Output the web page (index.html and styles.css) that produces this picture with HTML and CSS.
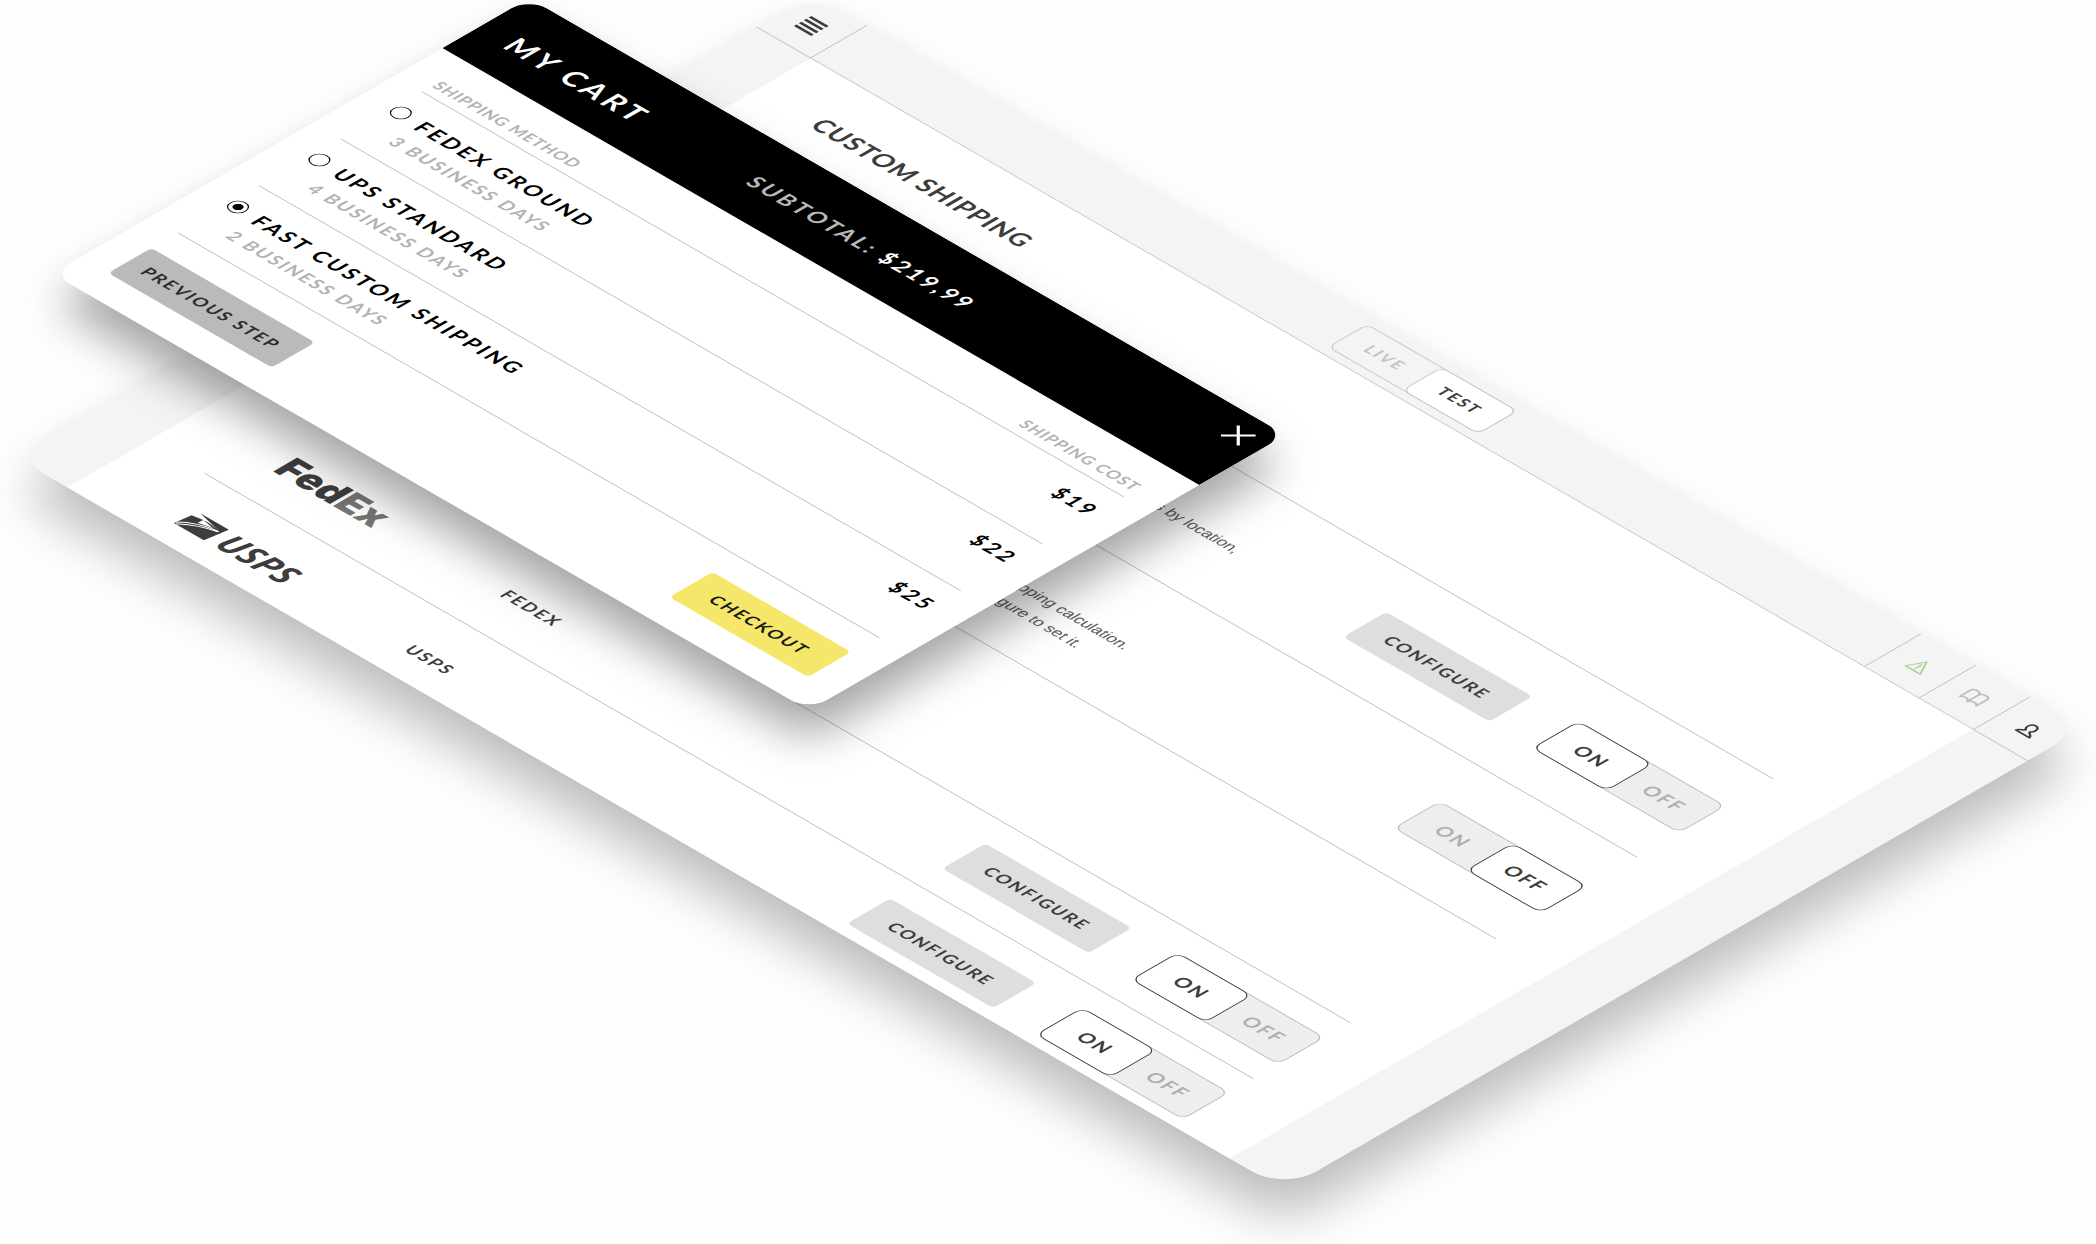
FILE: index.html
```html
<!DOCTYPE html>
<html lang="en">
<head>
<meta charset="utf-8">
<title>Custom shipping</title>
<link rel="stylesheet" href="styles.css">
</head>
<body>
<div class="stage">

  <section class="plane admin" aria-label="Store settings">
    <header class="topbar">
      <button class="cell" type="button" aria-label="Menu">
        <svg width="20" height="20" viewBox="0 0 20 20" stroke="#3d3d3d" stroke-width="3"><path d="M0 1.4h20M0 7.1h20M0 12.9h20M0 18.6h20"/></svg>
      </button>
      <div class="mode" role="group" aria-label="Mode">
        <button type="button" aria-pressed="false">LIVE</button>
        <button type="button" aria-pressed="true">TEST</button>
      </div>
      <nav class="tools">
        <a class="cell" href="#alerts" aria-label="Alerts">
          <svg width="20" height="20" viewBox="0 0 20 20" fill="none" stroke="#a9d796" stroke-width="1.7" stroke-linejoin="round" stroke-linecap="round"><path d="M10 2 18.5 18h-17zM10 8v5M10 15v.6"/></svg>
        </a>
        <a class="cell" href="#docs" aria-label="Guide">
          <svg width="22" height="20" viewBox="0 0 22 20" fill="none" stroke="#bdbdbd" stroke-width="2" stroke-linejoin="round"><path d="M11 5C10 1 3.500 0 1.500 4V17C4 14 9 14 11 18 13 14 18 14 20.500 17V4C18.500 0 12 1 11 5zM11 5V18"/></svg>
        </a>
        <a class="cell" href="#account" aria-label="Account">
          <svg width="20" height="20" viewBox="0 0 20 20" fill="none" stroke="#3d3d3d" stroke-width="2" stroke-linejoin="round"><path d="M9 12.500C5.500 10.500 5.500 3 11 3s5.500 7.500 2.500 9.500c.3 2 5 2.500 5.500 6H3.500c.5-3.500 5.200-4 5.500-6z"/></svg>
        </a>
      </nav>
    </header>

    <main class="content">
      <h1>CUSTOM SHIPPING</h1>
      <ul class="methods">
        <li class="method rates">
          <p class="about">Show rates by location,</p>
          <button class="btn configure" type="button">CONFIGURE</button>
          <div class="switch" role="group" aria-label="Rates by location">
            <button type="button" aria-pressed="true">ON</button>
            <button type="button" aria-pressed="false">OFF</button>
          </div>
        </li>
        <li class="method live">
          <p class="about">Live rates.<br>Enable shipping calculation.<br>Click Configure to set it.</p>
          <div class="switch" role="group" aria-label="Shipping calculation">
            <button type="button" aria-pressed="false">ON</button>
            <button type="button" aria-pressed="true">OFF</button>
          </div>
        </li>
        <li class="method spacer"></li>
        <li class="method">
          <div class="logo fedex">Fed<span>Ex</span></div>
          <h2>FEDEX</h2>
          <button class="btn configure" type="button">CONFIGURE</button>
          <div class="switch" role="group" aria-label="FedEx">
            <button type="button" aria-pressed="true">ON</button>
            <button type="button" aria-pressed="false">OFF</button>
          </div>
        </li>
        <li class="method last">
          <div class="logo usps">
            <svg width="39" height="25" viewBox="0 0 39 25">
              <path fill="#3d3d3d" d="M0 25 2.500 7 14 5 13.500 11 28 7.600 14 5C21 4.500 28 5.500 34 7L5.500 0H38.500L34.500 25z"/>
              <path fill="none" stroke="#fff" stroke-width="1.200" d="M0 23C9 14 22 9 34.500 7.600M2 24.500C12 16 24 10.500 34.500 8.500"/>
            </svg>
            <span>USPS</span>
          </div>
          <h2>USPS</h2>
          <button class="btn configure" type="button">CONFIGURE</button>
          <div class="switch" role="group" aria-label="USPS">
            <button type="button" aria-pressed="true">ON</button>
            <button type="button" aria-pressed="false">OFF</button>
          </div>
        </li>
      </ul>
    </main>
  </section>

  <form class="plane cart" aria-label="My cart">
    <header class="cart-head">
      <h2>MY CART</h2>
      <p class="subtotal"><span>SUBTOTAL:</span> $219,99</p>
      <button class="close" type="button" aria-label="Close">
        <svg width="20" height="20" viewBox="0 0 20 20" stroke="#fff" stroke-width="2.600"><path d="M0 0 20 20M20 0 0 20"/></svg>
      </button>
    </header>
    <div class="cart-body">
      <table>
        <thead>
          <tr><th scope="col">SHIPPING METHOD</th><th scope="col">SHIPPING COST</th></tr>
        </thead>
        <tbody>
          <tr>
            <td><div class="option"><input type="radio" name="ship" id="ground"><label for="ground">FEDEX GROUND<small>3 BUSINESS DAYS</small></label></div></td>
            <td>$19</td>
          </tr>
          <tr>
            <td><div class="option"><input type="radio" name="ship" id="standard"><label for="standard">UPS STANDARD<small>4 BUSINESS DAYS</small></label></div></td>
            <td>$22</td>
          </tr>
          <tr>
            <td><div class="option"><input type="radio" name="ship" id="fast" checked><label for="fast">FAST CUSTOM SHIPPING<small>2 BUSINESS DAYS</small></label></div></td>
            <td>$25</td>
          </tr>
        </tbody>
      </table>
      <div class="actions">
        <button class="btn previous" type="button">PREVIOUS STEP</button>
        <button class="btn checkout" type="submit">CHECKOUT</button>
      </div>
    </div>
  </form>

</div>
</body>
</html>
```
FILE: styles.css
```css
* {
  box-sizing: border-box;
}

body {
  margin: 0;
  background: #fefefe;
  color: #3d3d3d;
  font-family: Lato, "Open Sans", sans-serif;
  font-weight: 700;
}

h1,
h2,
p,
ul {
  margin: 0;
  padding: 0;
  font-weight: 700;
  list-style: none;
}

button,
input {
  margin: 0;
  padding: 0;
  border: 0;
  background: none;
  color: inherit;
  font: inherit;
}

button {
  letter-spacing: 2px;
}

svg {
  display: block;
  overflow: visible;
}

.stage {
  position: relative;
  min-height: 100vh;
  overflow: hidden;
}

/* Both windows lie on the same isometric plane. */
.plane {
  position: absolute;
  transform: matrix(0.866025, 0.5, -0.866025, 0.5, 0, 0);
  transform-origin: 0 0;
}

/* Store settings window */
.admin {
  top: -6px;
  left: calc(50% - 235px);
  display: flex;
  flex-direction: column;
  width: 1468px;
  height: 924px;
  border-radius: 37px;
  background: #f4f4f4;
  box-shadow: 34px 34px 50px rgba(0, 0, 0, 0.25), 0 0 16px rgba(0, 0, 0, 0.02);
  overflow: hidden;
}

.topbar {
  flex: none;
  display: flex;
  align-items: center;
  justify-content: space-between;
  height: 66px;
  border-bottom: 1px solid #bfbfbf;
}

.cell {
  display: flex;
  align-items: center;
  justify-content: center;
  width: 63px;
  height: 65px;
}

.topbar > .cell {
  margin-right: 132px;
  border-right: 1px solid #bfbfbf;
}

.tools {
  display: flex;
}

.tools .cell {
  border-left: 1px solid #bfbfbf;
}

.mode {
  display: flex;
  width: 174px;
  height: 46px;
  border: 1px solid #c4c4c4;
  border-radius: 8px;
  color: #c4c4c4;
  font-size: 16px;
}

.mode button {
  flex: 1;
  border-radius: 8px;
}

.mode [aria-pressed="true"] {
  margin: -1px;
  border: 1px solid #c4c4c4;
  background: #fff;
  color: #3d3d3d;
}

.content {
  flex: 1;
  min-height: 0;
  margin: 0 63px;
  padding: 0 66px 0 65px;
  background: #fff;
}

h1 {
  height: 165px;
  padding: 43px 0 0 2px;
  border-bottom: 1px solid #bfbfbf;
  font-size: 25px;
  line-height: 32px;
  letter-spacing: 1px;
}

.method {
  display: grid;
  grid-template-columns: 292px 217px 1fr auto 170px;
  align-items: center;
  height: 112px;
  border-bottom: 1px solid #bfbfbf;
}

.method.rates {
  height: 157px;
  padding-top: 6px;
}

.method.live {
  height: 163px;
  padding-top: 6px;
}

.method.spacer {
  height: 168px;
}

.method.last {
  height: 109px;
}

.method h2 {
  grid-column: 2;
  padding-top: 3px;
  font-size: 17px;
  letter-spacing: 2px;
}

.about {
  grid-column: 3;
  color: #5c5c5c;
  font: 400 16px/26px "Liberation Sans", Arial, sans-serif;
}

.logo {
  display: flex;
  align-items: center;
  padding-left: 32px;
}

.fedex {
  padding-left: 36px;
  color: #3d3d3d;
  font: 900 38px/48px Inter, sans-serif;
}

.fedex span {
  color: #757575;
}

.usps {
  gap: 6px;
  font: italic 700 34px/36px "Open Sans", sans-serif;
}

.btn {
  height: 50px;
  border-radius: 5px;
  font-size: 17px;
}

.configure {
  grid-column: 4;
  width: 169px;
  margin-right: 51px;
  background: #dedede;
}

.switch {
  grid-column: 5;
  display: flex;
  height: 54px;
  border: 1px solid #b8b8b8;
  border-radius: 9px;
  background: #eee;
  color: #b0b0b0;
  font-size: 19px;
}

.switch button {
  flex: 1;
  border-radius: 9px;
}

.switch [aria-pressed="true"] {
  margin: -1px;
  border: 1px solid #3d3d3d;
  background: #fff;
  color: #3d3d3d;
}

/* Cart window */
.cart {
  top: -2px;
  left: calc(50% - 519px);
  width: 874px;
  border-radius: 21px;
  background: #fff;
  box-shadow: 30px 30px 44px rgba(0, 0, 0, 0.34), 0 0 16px rgba(0, 0, 0, 0.02);
  overflow: hidden;
}

.cart-head {
  display: grid;
  grid-template-columns: 1fr auto 1fr;
  height: 100px;
  padding: 0 17px;
  background: #000;
  color: #fff;
}

.cart-head h2 {
  padding: 36px 0 0 16px;
  font-size: 29px;
  line-height: 36px;
  letter-spacing: 4px;
}

.subtotal {
  padding-top: 35px;
  font-size: 22px;
  line-height: 36px;
  letter-spacing: 3px;
}

.subtotal span {
  color: #b8b8b8;
}

.close {
  justify-self: end;
  width: 20px;
  height: 20px;
  margin-top: 18px;
}

.cart-body {
  padding: 0 32px 33px;
}

table {
  width: 100%;
  border-collapse: separate;
  border-spacing: 0;
}

th {
  height: 56px;
  padding: 0 0 7px;
  border-bottom: 1px solid #bfbfbf;
  color: #b3b3b3;
  font-size: 16px;
  line-height: 18px;
  letter-spacing: 1px;
  text-align: left;
  vertical-align: bottom;
}

td {
  height: 94px;
  padding: 20px 0 0;
  border-bottom: 1px solid #bfbfbf;
  color: #000;
  font-size: 21px;
  line-height: 24px;
  letter-spacing: 3px;
  vertical-align: top;
}

th:last-child,
td:last-child {
  text-align: right;
}

.option {
  display: flex;
  gap: 13px;
  line-height: 28px;
}

.option input {
  flex: none;
  width: 18px;
  height: 18px;
  margin-top: 4px;
  border: 1px solid #000;
  border-radius: 50%;
  appearance: none;
}

.option input:checked {
  background: radial-gradient(circle, #000 4px, #fff 5px);
}

.option small {
  display: block;
  color: #b3b3b3;
  font-size: 18px;
  line-height: 32px;
  letter-spacing: 2px;
}

.actions {
  display: flex;
  justify-content: space-between;
  padding: 30px 2px 0 0;
}

.previous {
  width: 189px;
  background: #bababa;
  color: #2b2b2b;
}

.checkout {
  width: 160px;
  background: #f5e769;
  color: #1a1a1a;
}
```
